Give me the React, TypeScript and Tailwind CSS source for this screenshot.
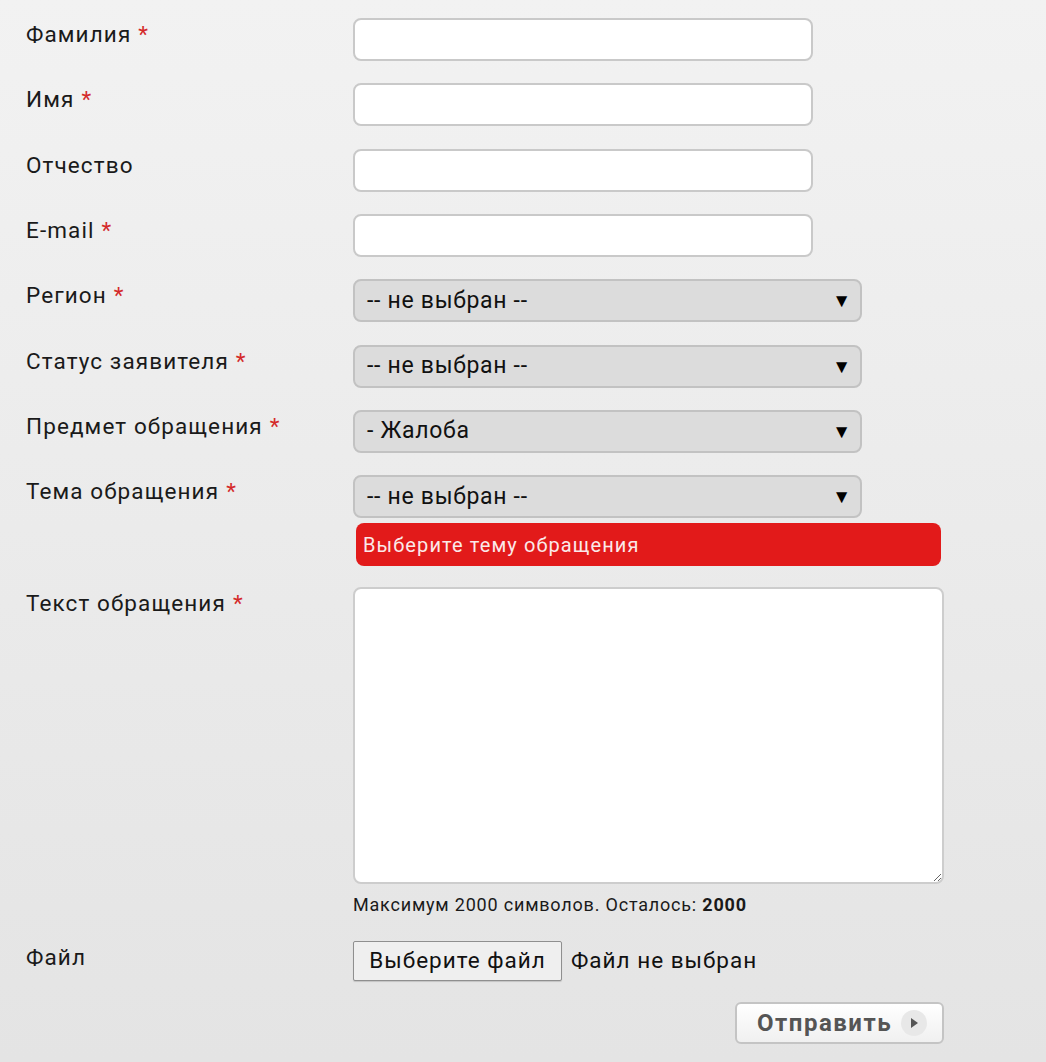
import React from "react";

const Star = () => <span className="text-[#d42a2a] ml-[7px]">*</span>;

function Label({ text, req }: { text: string; req?: boolean }) {
  return (
    <div className="text-[22.5px] leading-[32px] tracking-[1.1px] text-[#1a1a1a]">
      {text}
      {req && <Star />}
    </div>
  );
}

function TextRow({ label, req }: { label: string; req?: boolean }) {
  return (
    <div className="flex h-[65.33px]">
      <div className="w-[327px] shrink-0">
        <Label text={label} req={req} />
      </div>
      <input
        type="text"
        className="w-[460px] h-[43px] bg-white border-2 border-[#c9c9c9] rounded-[8px] outline-none px-3 text-[20px]"
      />
    </div>
  );
}

function SelectBox({ value }: { value: string }) {
  return (
    <div className="w-[509px] h-[43px] bg-[#dcdcdc] border-2 border-[#c2c2c2] rounded-[8px] flex items-center justify-between pl-[12px] pr-[9px]">
      <span className="text-[23px] tracking-[0.7px] text-[#111]">{value}</span>
      <span className="text-[19px] text-black leading-none">▼</span>
    </div>
  );
}

function SelectRow({ label, value, req }: { label: string; value: string; req?: boolean }) {
  return (
    <div className="flex h-[65.33px]">
      <div className="w-[327px] shrink-0">
        <Label text={label} req={req} />
      </div>
      <SelectBox value={value} />
    </div>
  );
}

export default function App() {
  return (
    <div
      className="min-h-[1062px] w-full bg-gradient-to-b from-[#f2f2f2] to-[#e4e4e4] pl-[26px] pt-[18px]"
      style={{ fontFamily: "Roboto, 'Noto Sans', sans-serif" }}
    >
      <TextRow label="Фамилия" req />
      <TextRow label="Имя" req />
      <TextRow label="Отчество" />
      <TextRow label="E-mail" req />
      <SelectRow label="Регион" value="-- не выбран --" req />
      <SelectRow label="Статус заявителя" value="-- не выбран --" req />
      <SelectRow label="Предмет обращения" value="- Жалоба" req />
      <div className="flex">
        <div className="w-[327px] shrink-0">
          <Label text="Тема обращения" req />
        </div>
        <div className="flex flex-col">
          <SelectBox value="-- не выбран --" />
          <div className="mt-[5px] ml-[3px] w-[585px] h-[43px] bg-[#e21a1a] rounded-[8px] flex items-center pl-[7px] text-[20px] tracking-[1.1px] text-[#fbe9e9]">
            Выберите тему обращения
          </div>
        </div>
      </div>
      <div className="flex mt-[21px]">
        <div className="w-[327px] shrink-0">
          <Label text="Текст обращения" req />
        </div>
        <div className="flex flex-col">
          <textarea className="w-[591px] h-[297px] bg-white border-2 border-[#cdcdcd] rounded-[8px] outline-none p-2 text-[18px] block" />
          <div className="mt-[9px] text-[18px] leading-[24px] tracking-[0.8px] text-[#1a1a1a]">
            Максимум 2000 символов. Осталось: <b>2000</b>
          </div>
        </div>
      </div>
      <div className="flex mt-[24px]">
        <div className="w-[327px] shrink-0">
          <Label text="Файл" />
        </div>
        <div className="flex items-center">
          <button className="h-[40px] w-[209px] bg-[#efefef] border border-[#8f8f8f] rounded-[2px] text-[22.5px] tracking-[1px] text-[#111] shadow-[0_1px_1px_rgba(0,0,0,0.15)]">
            Выберите файл
          </button>
          <span className="ml-[9px] text-[22.5px] tracking-[1px] text-[#111]">Файл не выбран</span>
        </div>
      </div>
      <div className="flex mt-[21px] w-[918px] justify-end">
        <button className="w-[209px] h-[42px] rounded-[6px] border-2 border-[#c4c4c4] bg-gradient-to-b from-[#ffffff] to-[#f0f0f0] flex items-center pl-[20px] gap-[9px]">
          <span className="text-[24px] font-bold tracking-[1.5px] text-[#555]">Отправить</span>
          <span className="w-[26px] h-[26px] rounded-full bg-[#e8e8e8] flex items-center justify-center">
            <svg width="10" height="12" viewBox="0 0 10 12">
              <path d="M2 1 L9 6 L2 11 Z" fill="#555" />
            </svg>
          </span>
        </button>
      </div>
    </div>
  );
}
